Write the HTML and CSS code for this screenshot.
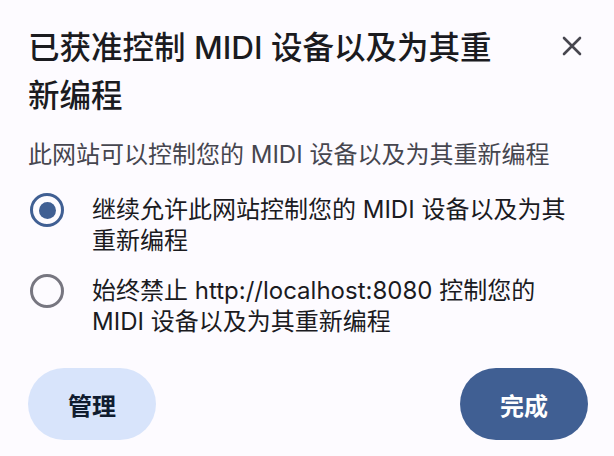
FILE: index.html
```html
<!DOCTYPE html>
<html lang="zh-CN">
<head>
<meta charset="utf-8">
<link rel="stylesheet" href="styles.css">
</head>
<body>
<div class="dialog">
  <div class="header">
    <h1 class="title">已获准控制 MIDI 设备以及为其重新编程</h1>
    <button class="close" aria-label="关闭">
      <svg width="20" height="20" viewBox="0 0 20 20"><path d="M2 2 L18 18 M18 2 L2 18" stroke="#47464f" stroke-width="2.6" stroke-linecap="round" fill="none"/></svg>
    </button>
  </div>
  <p class="subtitle">此网站可以控制您的 MIDI 设备以及为其重新编程</p>
  <div class="options">
    <label class="option">
      <span class="radio checked"><span class="dot"></span></span>
      <span class="option-text">继续允许此网站控制您的 MIDI 设备以及为其重新编程</span>
    </label>
    <label class="option">
      <span class="radio"></span>
      <span class="option-text">始终禁止 http://localhost:8080 控制您的 MIDI 设备以及为其重新编程</span>
    </label>
  </div>
  <div class="actions">
    <button class="btn btn-tonal">管理</button>
    <button class="btn btn-filled">完成</button>
  </div>
</div>
</body>
</html>
```
FILE: styles.css
```css
* { box-sizing: border-box; }
html, body { margin: 0; padding: 0; }
body {
  background: #fdfbff;
  font-family: "Inter", "Noto Sans CJK SC", sans-serif;
  color: #1b1b1f;
  width: 614px;
  height: 456px;
  overflow: hidden;
}
.dialog {
  padding: 24px 26px 0 28px;
  display: flex;
  flex-direction: column;
}
.header {
  display: flex;
  align-items: flex-start;
  justify-content: space-between;
}
.title {
  margin: 0;
  font-size: 31.5px;
  line-height: 48px;
  font-weight: 500;
  width: 490px;
  color: #1b1b1f;
}
.close {
  border: 0;
  background: none;
  padding: 0;
  margin: 12px 6px 0 0;
  width: 20px;
  height: 20px;
  display: flex;
}
.subtitle {
  margin: 19px 0 0;
  font-size: 24px;
  line-height: 32px;
  color: #46464f;
}
.options {
  display: flex;
  flex-direction: column;
  gap: 19px;
  margin-top: 23px;
}
.option {
  display: flex;
  align-items: flex-start;
  gap: 28px;
}
.radio {
  flex: none;
  width: 34px;
  height: 34px;
  margin-left: 2px;
  border-radius: 50%;
  border: 3.5px solid #777680;
  margin-top: -1px;
  display: flex;
  align-items: center;
  justify-content: center;
}
.radio.checked { border-color: #405f93; }
.dot {
  width: 17px;
  height: 17px;
  border-radius: 50%;
  background: #405f93;
}
.option-text {
  font-size: 24px;
  line-height: 31px;
  color: #1b1b1f;
  width: 486px;
}
.actions {
  display: flex;
  justify-content: space-between;
  margin-top: 31px;
}
.btn {
  border: 0;
  height: 72px;
  width: 128px;
  border-radius: 36px;
  font-family: "Inter", "Noto Sans CJK SC", sans-serif;
  font-size: 24px;
  font-weight: 700;
}
.btn-tonal { background: #d8e4fb; color: #101c2f; }
.btn-filled { background: #405f93; color: #ffffff; }
```
